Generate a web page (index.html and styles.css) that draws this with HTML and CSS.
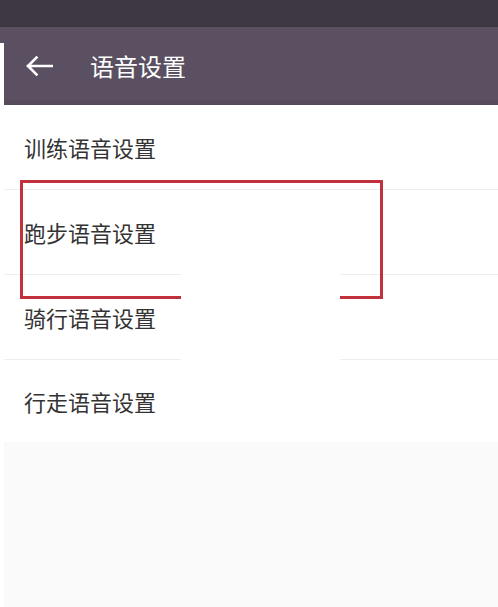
FILE: index.html
```html
<!DOCTYPE html>
<html lang="zh-CN">
<head>
<meta charset="utf-8">
<title>语音设置</title>
<link rel="stylesheet" href="styles.css">
</head>
<body>
<div class="screen">
  <div class="status-bar"></div>
  <header class="toolbar">
    <span class="back">
      <svg width="28" height="20" viewBox="0 0 28 20" aria-hidden="true">
        <path d="M27 10H3M11.5 1.5L3 10l8.5 8.5" fill="none" stroke="#fff" stroke-width="2.6" stroke-linecap="square"/>
      </svg>
    </span>
    <h1 class="title">语音设置</h1>
  </header>
  <ul class="list">
    <li class="row">训练语音设置</li>
    <li class="row">跑步语音设置</li>
    <li class="row">骑行语音设置</li>
    <li class="row last">行走语音设置</li>
  </ul>
  <div class="filler"></div>
  <div class="highlight"></div>
  <div class="patch"></div>
</div>
</body>
</html>
```
FILE: styles.css
```css
html, body {
  margin: 0;
  padding: 0;
  background: #fff;
}
.screen {
  position: relative;
  display: flex;
  flex-direction: column;
  min-height: 607px;
  width: 498px;
  overflow: hidden;
  font-family: "Noto Sans CJK SC", "Noto Sans", sans-serif;
}
.status-bar {
  height: 27px;
  background: #3e3843;
}
.toolbar {
  height: 78px;
  box-sizing: border-box;
  display: flex;
  align-items: center;
  padding: 0 0 1px 25px;
  background:
    linear-gradient(#5a5061, #5a5061) 0 0 / 100% 16px no-repeat,
    linear-gradient(#554b5b, #554b5b) 4px 100% / calc(100% - 4px) 5px no-repeat,
    linear-gradient(#5a5061, #5a5061) 4px 0 / calc(100% - 4px) 100% no-repeat,
    #fff;
}
.back {
  display: flex;
  width: 28px;
  height: 20px;
}
.title {
  margin: 0 0 0 37px;
  font-size: 24px;
  font-weight: 400;
  color: #fff;
  line-height: 1;
}
.list {
  list-style: none;
  margin: 0 0 0 4px;
  padding: 0;
}
.row {
  height: 85px;
  box-sizing: border-box;
  display: flex;
  align-items: center;
  padding: 0 0 0 20px;
  font-size: 22px;
  color: #333;
  border-bottom: 1px solid #eeeeee;
}
.row.last {
  height: 82px;
  border-bottom: 0;
}
.filler {
  flex: 1;
  margin-left: 4px;
  background: #fafafa;
}
.highlight {
  position: absolute;
  left: 20px;
  top: 180px;
  width: 363px;
  height: 119px;
  box-sizing: border-box;
  border: 3px solid #c1313b;
}
.patch {
  position: absolute;
  left: 181px;
  top: 230px;
  width: 159px;
  height: 132px;
  background: #fff;
}
```
